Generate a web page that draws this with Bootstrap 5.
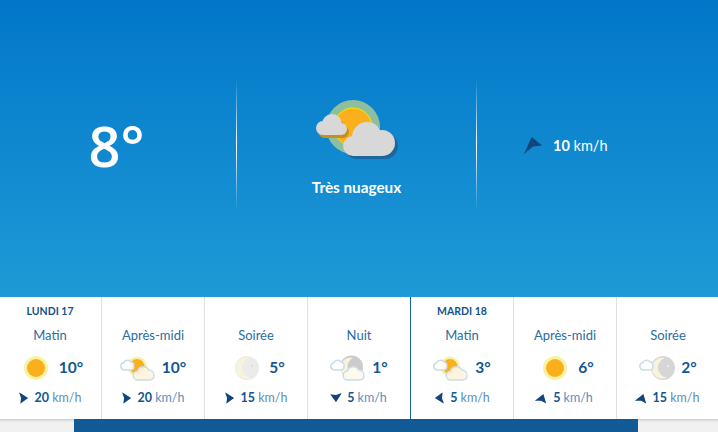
<!DOCTYPE html>
<html lang="fr">
<head>
    <meta charset="UTF-8">
    <meta name="viewport" content="width=device-width, initial-scale=1.0">
    <link href="https://cdn.jsdelivr.net/npm/bootstrap@5.3.7/dist/css/bootstrap.min.css" rel="stylesheet">
    <script src="https://cdn.jsdelivr.net/npm/bootstrap@5.3.7/dist/js/bootstrap.bundle.min.js"></script>
    <title>Météo</title>
    <style>
        html, body { height: 432px; overflow: hidden; }
        body { font-family: "Lato", "Liberation Sans", sans-serif; color: #12568f; }
        .hero { height: 297px; background: linear-gradient(180deg, #0277c9 0%, #1e9ad6 100%); color: #fff; }
        .hero-col { width: 236px; height: 130px; margin-top: 80px; }
        .hero-mid { width: 241px; border-image: linear-gradient(180deg, transparent, #fff 50%, transparent) 1; border-left: 1px solid; border-right: 1px solid; }
        .temp-big { font-size: 56px; font-weight: 600; line-height: 1; font-family: "Open Sans", sans-serif; padding-right: 3px; }
        .hero-label { font-size: 15.3px; font-weight: 700; margin-top: 14px; }
        .hero-wind { font-size: 14.5px; padding-left: 47px; padding-top: 1px; gap: 11px; }
        .strip { height: 122px; overflow: hidden; }
        .cells { display: grid; grid-template-columns: repeat(7, 103px); height: 100%; margin-left: -1px; }
        .cell { border-right: 1px solid #dee0e2; text-align: center; padding-top: 7px; }
        .cell-end { border-right-color: #0b66a6; }
        .day-name { height: 15px; font-size: 10.5px; font-weight: 700; line-height: 15px; color: #14518c; }
        .moment { font-size: 13px; line-height: 17px; margin-top: 8px; color: #2a6c9f; }
        .cond { height: 26px; margin-top: 11px; gap: 6px; }
        .temp { font-size: 15.5px; font-weight: 700; color: #12568f; }
        .wind { font-size: 12.5px; margin-top: 9px; gap: 6px; color: #5d8fb8; line-height: 16px; }
        .wind b { color: #12568f; }
        .scroll-track { height: 13px; background: #f1f1f1; box-shadow: inset 0 3px 3px -2px rgba(0,0,0,.2); }
        .scroll-left { width: 74px; }
        .scroll-thumb { width: 564px; background: #125a96; }
    </style>
</head>
<body>
    <svg width="0" height="0" class="position-absolute">
        <defs>
            <symbol id="bigcloud" viewBox="0 0 52 34"><circle cx="24" cy="15" r="15"/><circle cx="39" cy="21" r="13"/><circle cx="10" cy="24" r="10"/><rect x="10" y="18" width="30" height="16"/></symbol>
            <symbol id="smallcloud" viewBox="0 0 33 21"><circle cx="8" cy="14" r="7"/><circle cx="17" cy="10" r="10"/><rect x="8" y="11" width="18" height="10"/><circle cx="26" cy="15" r="6"/></symbol>
            <symbol id="arrow" viewBox="0 0 12 14"><path d="M0 0 L11 7 L1.500 14 L2.500 7 Z"/></symbol>
            <symbol id="i-sun" viewBox="0 0 36 26"><circle cx="19" cy="13" r="12" fill="#f7f3a5"/><circle cx="19" cy="13" r="9" fill="#f9b01c"/></symbol>
            <symbol id="i-sunny-cloud" viewBox="0 0 36 26">
                <circle cx="17" cy="11.500" r="10" fill="#f7f3a5"/><circle cx="17" cy="11.500" r="7.500" fill="#f9b01c"/>
                <path d="M4 15a3.800 3.800 0 0 1 0-7.500c1-3 6-3 7-.5 2 0 3 1.500 3 3.800s-1 4.200-3 4.200z" fill="#fff" fill-opacity=".9" stroke="#c9dcec" stroke-width="1.400"/>
                <path d="M18 25a4.500 4.500 0 0 1-.5-9c1-5 9-6 11-1 3 0 5.500 2 5.500 5.300s-2 4.700-4.500 4.700z" fill="#fdf4e0" fill-opacity=".92" stroke="#c9dcec" stroke-width="1.400"/>
            </symbol>
            <symbol id="i-moon" viewBox="0 0 36 26">
                <circle cx="20" cy="13" r="12" fill="#ebebe9"/>
                <path d="M22 3A10.500 10.500 0 1 0 24 22.500 10 10 0 0 1 22 3z" fill="#f8f4dc"/>
                <circle cx="25" cy="11" r="1" fill="#dadada"/>
            </symbol>
            <symbol id="i-moon-cloud" viewBox="0 0 36 26">
                <circle cx="21.500" cy="12" r="11.500" fill="#cbcbcb"/>
                <path d="M23 3A10 10 0 1 0 25 21.500 10 10 0 0 1 23 3z" fill="#f8f4dc"/>
                <path d="M4 15a3.800 3.800 0 0 1 0-7.500c1-3 6-3 7-.5 2 0 3 1.500 3 3.800s-1 4.200-3 4.200z" fill="#fff" fill-opacity=".9" stroke="#c9dcec" stroke-width="1.400"/>
                <path d="M18 25a4.500 4.500 0 0 1-.5-9c1-5 9-6 11-1 3 0 5.500 2 5.500 5.300s-2 4.700-4.500 4.700z" fill="#fdf9ec" stroke="#c9dcec" stroke-width="1.400"/>
            </symbol>
            <symbol id="i-moon-left" viewBox="0 0 36 26">
                <circle cx="24" cy="13" r="12" fill="#d6d6d6"/>
                <path d="M26 3A10.500 10.500 0 1 0 28 22.500 10 10 0 0 1 26 3z" fill="#f8f4dc"/>
                <circle cx="29" cy="11" r="1" fill="#f3f3f3"/>
                <path d="M4 15a3.800 3.800 0 0 1 0-7.500c1-3 6-3 7-.5 2 0 3 1.500 3 3.800s-1 4.200-3 4.200z" fill="#fff" fill-opacity=".9" stroke="#c9dcec" stroke-width="1.400"/>
            </symbol>
        </defs>
    </svg>

    <section class="hero d-flex">
        <div class="hero-col d-flex align-items-center justify-content-center"><span class="temp-big">8°</span></div>
        <div class="hero-col hero-mid d-flex flex-column align-items-center">
            <svg width="92" height="66" viewBox="310 96 92 66" class="mt-3">
                <circle cx="352" cy="127" r="27" fill="#8dbf9f"/>
                <circle cx="352" cy="127" r="19" fill="#f9b01c" stroke="#ffe600" stroke-width="1"/>
                <use href="#smallcloud" x="316" y="117" width="33" height="21" fill="#c98f1e"/>
                <use href="#smallcloud" x="314" y="114" width="33" height="21" fill="#d8d8d8"/>
                <use href="#bigcloud" x="345" y="125" width="52" height="34" fill="#1c679d"/>
                <use href="#bigcloud" x="342" y="122" width="52" height="34" fill="#d8d8d8"/>
            </svg>
            <div class="hero-label">Très nuageux</div>
        </div>
        <div class="hero-col flex-grow-1 d-flex align-items-center hero-wind">
            <svg width="18" height="18" viewBox="0 0 18 18" fill="#12457c"><path d="M7.700 0 L18 8.500 L9 9.500 L0 17 Z"/></svg>
            <span><b>10</b> km/h</span>
        </div>
    </section>

    <section class="strip bg-white">
        <div class="cells" id="cells"></div>
    </section>

    <div class="scroll-track d-flex">
        <div class="scroll-left"></div>
        <div class="scroll-thumb"></div>
    </div>

    <script>
        const slots = [
            { day: "LUNDI 17", name: "Matin", icon: "i-sun", t: 10, rot: 0, w: 20 },
            { name: "Après-midi", icon: "i-sunny-cloud", t: 10, rot: 0, w: 20 },
            { name: "Soirée", icon: "i-moon", t: 5, rot: 0, w: 15 },
            { name: "Nuit", icon: "i-moon-cloud", t: 1, rot: 90, w: 5, end: true },
            { day: "MARDI 18", name: "Matin", icon: "i-sunny-cloud", t: 3, rot: 180, w: 5 },
            { name: "Après-midi", icon: "i-sun", t: 6, rot: 290, w: 5 },
            { name: "Soirée", icon: "i-moon-left", t: 2, rot: 290, w: 15 }
        ];
        let html = "";
        slots.forEach(function (s) {
            html += `<div class="cell${s.end ? " cell-end" : ""}">
                <div class="day-name">${s.day || ""}</div>
                <div class="moment">${s.name}</div>
                <div class="cond d-flex align-items-center justify-content-center">
                    <svg width="36" height="26"><use href="#${s.icon}"/></svg>
                    <span class="temp">${s.t}°</span>
                </div>
                <div class="wind d-flex align-items-center justify-content-center">
                    <svg width="10" height="12" viewBox="0 0 12 14" fill="#12457c" style="transform: rotate(${s.rot}deg)"><use href="#arrow"/></svg>
                    <span><b>${s.w}</b> km/h</span>
                </div>
            </div>`;
        });
        document.getElementById("cells").innerHTML = html;
    </script>
</body>
</html>
